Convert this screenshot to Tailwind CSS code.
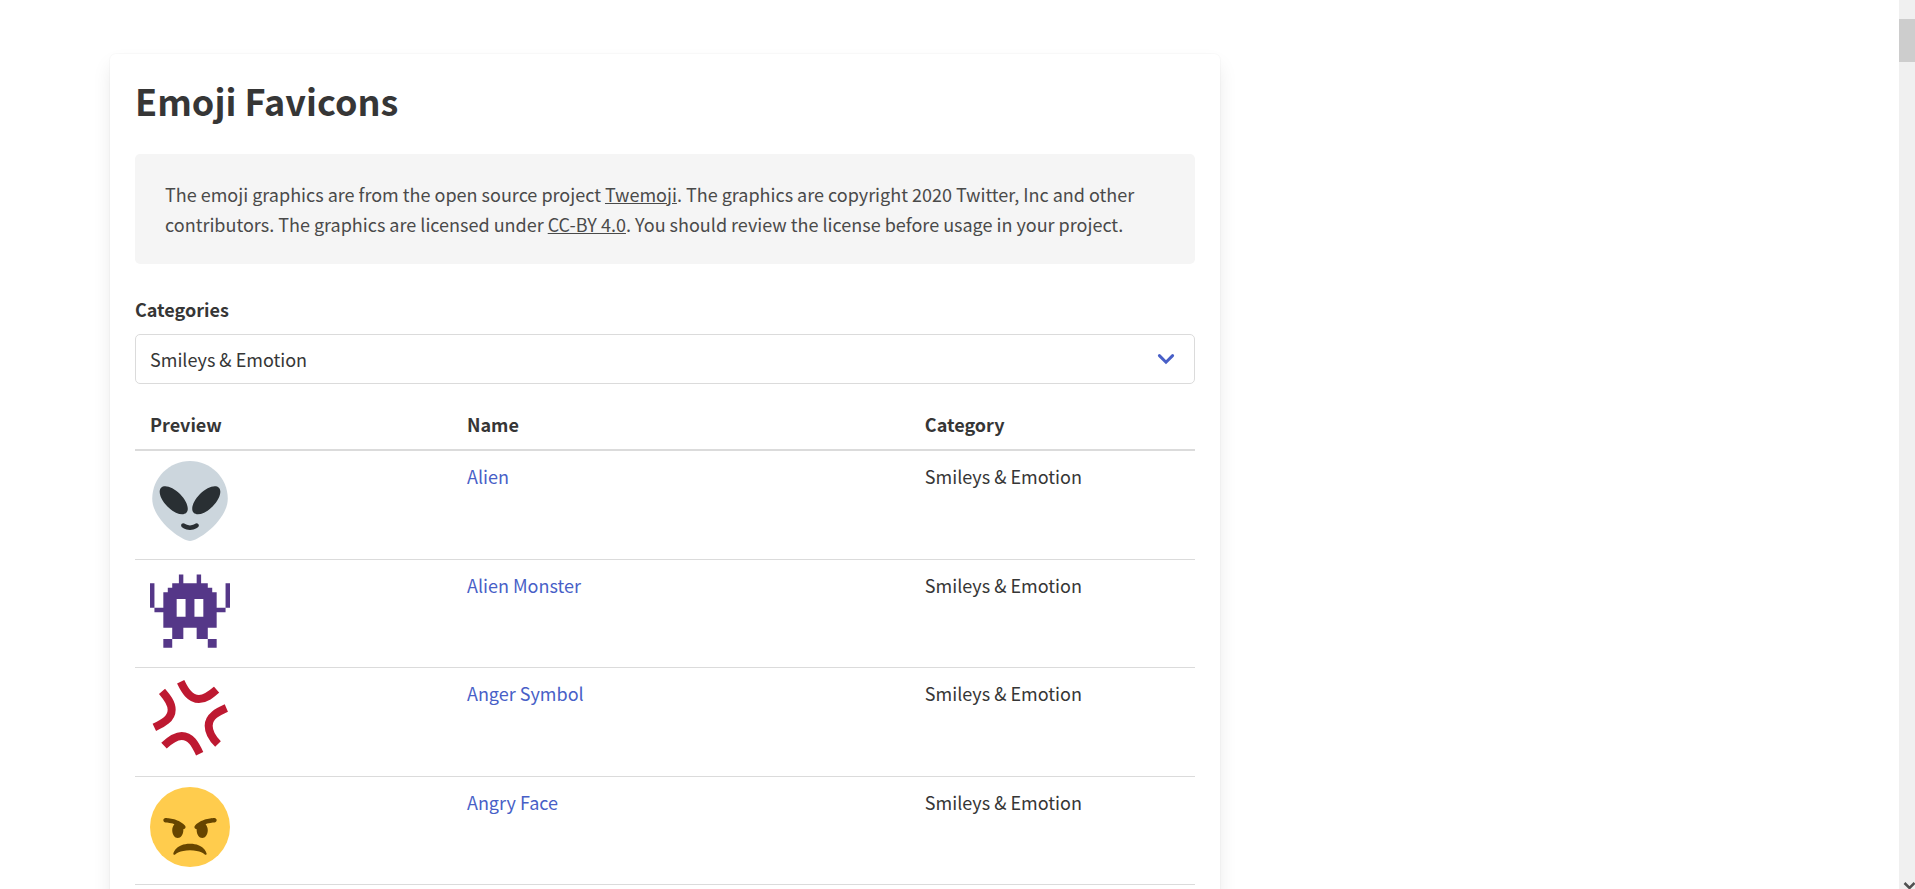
<!DOCTYPE html>
<html lang="en" class="overflow-hidden">
<head>
<meta charset="utf-8">
<meta name="viewport" content="width=device-width, initial-scale=1">
<title>Emoji Favicons</title>
<script src="https://cdn.jsdelivr.net/npm/@tailwindcss/browser@4"></script>
</head>
<body class="flex h-screen overflow-hidden bg-white font-['Noto_Sans_CJK_SC','Open_Sans',sans-serif] text-[18px] leading-[30px] text-[#363636]">
<main class="min-w-0 flex-1 px-[110px] pt-[54px]">
  <section class="max-w-[1110px] rounded-md bg-white p-[25px] pb-20 shadow-[0_10px_20px_-2px_rgba(10,10,10,0.1),0_0_0_1px_rgba(10,10,10,0.02)]">
    <h1 class="mb-[32px] text-[36px] leading-[43px] font-bold">Emoji Favicons</h1>
    <div class="rounded-[5px] bg-[#f5f5f5] px-[30px] py-[25px] text-[#4a4a4a]">
      <p>The emoji graphics are from the open source project <a href="#" class="underline">Twemoji</a>. The graphics are copyright 2020 Twitter, Inc and other contributors. The graphics are licensed under <a href="#" class="underline">CC-BY 4.0</a>. You should review the license before usage in your project.</p>
    </div>
    <label for="category" class="mt-[30px] mb-[10px] block font-bold">Categories</label>
    <div class="relative mb-[15px]">
      <select id="category" class="block h-[50px] w-full appearance-none rounded-[5px] border border-[#dbdbdb] bg-white pr-12 pl-[14px] text-[#363636]">
        <option>Smileys &amp; Emotion</option>
      </select>
      <svg class="pointer-events-none absolute top-[19px] right-5 h-3 w-[18px]" viewBox="0 0 18 12" fill="none" stroke="#485fc7" stroke-width="3" stroke-linecap="round" aria-hidden="true"><path d="M2.4 2.6 9 9.2l6.600-6.600"/></svg>
    </div>
    <table class="w-full table-fixed border-collapse text-left">
      <colgroup><col class="w-[29.9%]"><col class="w-[43.2%]"><col class="w-[26.9%]"></colgroup>
      <thead>
        <tr class="border-b-2 border-[#dbdbdb]">
          <th class="px-[15px] py-[10px]">Preview</th>
          <th class="px-[15px] py-[10px]">Name</th>
          <th class="px-[15px] py-[10px]">Category</th>
        </tr>
      </thead>
      <tbody class="align-top">
        <tr class="h-[109px] border-b border-[#dbdbdb]">
          <td class="px-[15px] pt-[10px]"><svg class="size-20" viewBox="0 0 36 36" role="img" aria-label="Alien"><path fill="#CCD6DD" d="M35 17c0 9.389-13.223 19-17 19-3.778 0-17-9.611-17-19S8.611 0 18 0s17 7.611 17 17z"/><path fill="#292F33" d="M13.503 14.845c3.124 3.124 4.39 6.923 2.828 8.485-1.562 1.562-5.361.297-8.485-2.828-3.124-3.124-4.391-6.923-2.828-8.485s5.361-.296 8.485 2.828zm8.994 0c-3.124 3.124-4.39 6.923-2.828 8.485 1.562 1.562 5.361.297 8.485-2.828 3.125-3.124 4.391-6.923 2.828-8.485-1.562-1.562-5.361-.297-8.485 2.828zM18 31c-2.347 0-3.575-1.16-3.707-1.293-.391-.391-.391-1.023 0-1.414.387-.387 1.013-.391 1.404-.01.051.047.806.717 2.303.717 1.519 0 2.273-.69 2.305-.719.395-.379 1.02-.361 1.4.031.38.392.376 1.011-.012 1.396C21.575 29.84 20.347 31 18 31z"/></svg></td>
          <td class="px-[15px] pt-[10px]"><a href="#" class="text-[#485fc7]">Alien</a></td>
          <td class="px-[15px] pt-[10px]">Smileys &amp; Emotion</td>
        </tr>
        <tr class="h-[108px] border-b border-[#dbdbdb]">
          <td class="px-[15px] pt-[10px]"><svg class="size-20" viewBox="0 0 36 36" role="img" aria-label="Alien Monster"><path fill="#553788" fill-rule="evenodd" d="M13 2h2v4h6V2h2v4h3v2h2v2h2v7h4V6h2v11h-2v2h-4v7h-4v5h4v4h-4v-4h-5v-5h-6v5h-5v4H6v-4h4v-5H6v-7H2v-2H0V6h2v11h4v-7h2V8h2V6h3zM12 13v8h4v-8zM20 13v8h4v-8z"/></svg></td>
          <td class="px-[15px] pt-[10px]"><a href="#" class="text-[#485fc7]">Alien Monster</a></td>
          <td class="px-[15px] pt-[10px]">Smileys &amp; Emotion</td>
        </tr>
        <tr class="h-[109px] border-b border-[#dbdbdb]">
          <td class="px-[15px] pt-[10px]"><svg class="size-20" viewBox="60 42 240 240" role="img" aria-label="Anger Symbol"><g fill="none" stroke="#BE1931" stroke-width="24"><path d="M152 53C165 80 180 105 207 105c21 0 38-15 53-28"/><path d="M96 82c12 14 29 33 29 55 0 28-27 41-52 53"/><path d="M289 132c-25 11-53 25-53 53 0 23 14 41 28 55"/><path d="M102 245c15-14 32-29 53-29 28 0 41 26 54 53"/></g></svg></td>
          <td class="px-[15px] pt-[10px]"><a href="#" class="text-[#485fc7]">Anger Symbol</a></td>
          <td class="px-[15px] pt-[10px]">Smileys &amp; Emotion</td>
        </tr>
        <tr class="h-[108px] border-b border-[#dbdbdb]">
          <td class="px-[15px] pt-[10px]"><svg class="size-20" viewBox="0 0 36 36" role="img" aria-label="Angry Face"><circle fill="#FFCC4D" cx="18" cy="18" r="18"/><path fill="#664500" d="M25.485 29.879C25.44 29.7 24.317 25.5 18 25.5c-6.318 0-7.44 4.2-7.485 4.379-.055.217.043.442.237.554.195.111.439.078.6-.077.019-.019 1.954-1.856 6.648-1.856s6.63 1.837 6.648 1.855c.096.095.224.145.352.145.084 0 .169-.021.246-.064.196-.112.294-.339.239-.557zm-9.778-12.586C12.452 14.038 7.221 14 7 14c-.552 0-.999.447-.999.998-.001.552.446 1 .998 1.002.029 0 1.925.022 3.983.737-.593.64-.982 1.634-.982 2.763 0 1.934 1.119 3.5 2.5 3.5s2.5-1.566 2.5-3.5c0-.174-.019-.34-.037-.507.013 0 .025.007.037.007.256 0 .512-.098.707-.293.391-.391.391-1.023 0-1.414zM29 14c-.221 0-5.451.038-8.707 3.293-.391.391-.391 1.023 0 1.414.195.195.451.293.707.293.013 0 .024-.007.036-.007-.016.167-.036.333-.036.507 0 1.934 1.119 3.5 2.5 3.5s2.5-1.566 2.5-3.5c0-1.129-.389-2.123-.982-2.763 2.058-.715 3.954-.737 3.984-.737.551-.002.998-.45.997-1.002-.001-.551-.447-.998-.999-.998z"/></svg></td>
          <td class="px-[15px] pt-[10px]"><a href="#" class="text-[#485fc7]">Angry Face</a></td>
          <td class="px-[15px] pt-[10px]">Smileys &amp; Emotion</td>
        </tr>
      </tbody>
    </table>
  </section>
</main>
<div class="flex w-4 shrink-0 flex-col justify-between bg-[#f0f0f0] pt-[19px]" aria-hidden="true">
  <div class="h-[43px] bg-[#cdcdcd]"></div>
  <svg class="h-[7px] w-4" viewBox="0 0 16 7" fill="none" stroke="#505050" stroke-width="2.500"><path d="M5.500 1l5 5 5-5"/></svg>
</div>
</body>
</html>
